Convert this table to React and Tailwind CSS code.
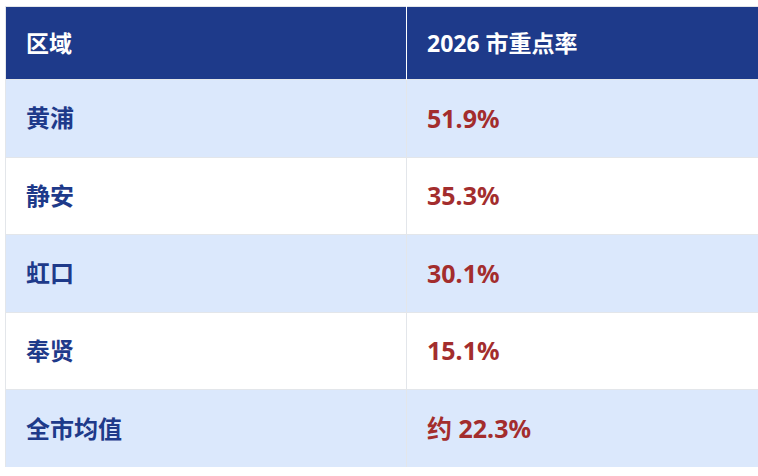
const rows = [
  { area: '黄浦', rate: '51.9%', shade: true },
  { area: '静安', rate: '35.3%', shade: false },
  { area: '虹口', rate: '30.1%', shade: true },
  { area: '奉贤', rate: '15.1%', shade: false },
  { area: '全市均值', rate: '约 22.3%', shade: true },
]

export default function App() {
  return (
    <div className="w-[758px] h-[476px] overflow-hidden bg-white pt-[6px] pl-[5px] font-['Noto_Sans','Noto_Sans_CJK_SC',sans-serif]">
      <table className="w-[804px] border-collapse border-t border-l border-[#e3e6ea] table-fixed">
        <thead>
          <tr className="h-[73px] bg-[#1e3a8a] text-white text-[23px] font-bold">
            <th className="w-[401px] text-left pl-[20px] border-r border-white">区域</th>
            <th className="text-left pl-[20px]">2026 市重点率</th>
          </tr>
        </thead>
        <tbody>
          {rows.map((r) => (
            <tr
              key={r.area}
              className={`h-[77.5px] font-bold border-t border-[#e3e6ea] ${r.shade ? 'bg-[#dbe8fc]' : 'bg-white'}`}
            >
              <td className="pl-[20px] text-[24px] text-[#1e3a8a] border-r border-[#e3e6ea]">{r.area}</td>
              <td className="pl-[20px] text-[25px] text-[#a32d2d]">{r.rate}</td>
            </tr>
          ))}
        </tbody>
      </table>
    </div>
  )
}
